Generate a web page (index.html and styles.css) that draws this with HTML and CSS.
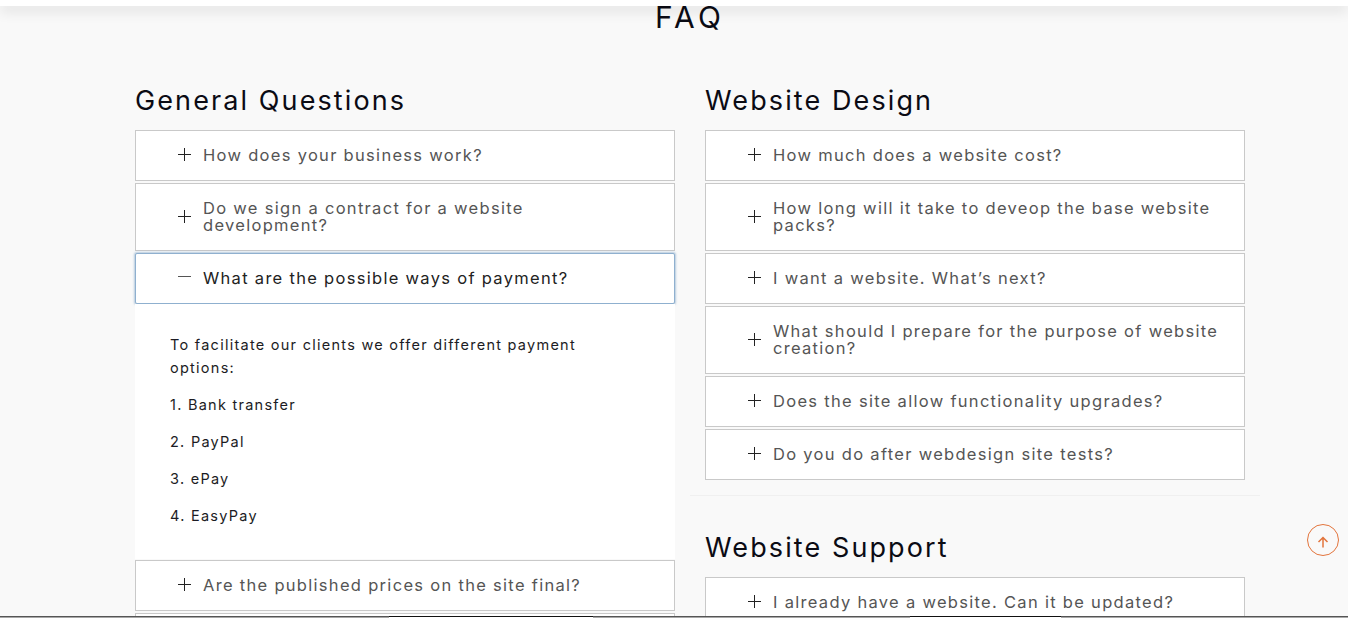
FILE: index.html
```html
<!DOCTYPE html>
<html lang="en">
<head>
    <meta charset="UTF-8">
    <meta name="viewport" content="width=device-width, initial-scale=1.0">
    <title>FAQ</title>
    <link rel="stylesheet" href="styles.css">
</head>
<body>
    <header class="top-bar"></header>

    <main class="faq">
        <h1>FAQ</h1>
        <div class="faq-columns">
            <section class="faq-col">
                <h2>General Questions</h2>
                <div class="faq-item"><span class="plus"></span><span class="q">How does your business work?</span></div>
                <div class="faq-item"><span class="plus"></span><span class="q">Do we sign a contract for a website development?</span></div>
                <div class="faq-item open"><span class="minus"></span><span class="q">What are the possible ways of payment?</span></div>
                <div class="answer">
                    <p>To facilitate our clients we offer different payment options:</p>
                    <p>1. Bank transfer</p>
                    <p>2. PayPal</p>
                    <p>3. ePay</p>
                    <p>4. EasyPay</p>
                </div>
                <div class="faq-item"><span class="plus"></span><span class="q">Are the published prices on the site final?</span></div>
                <div class="faq-item"></div>
            </section>
            <section class="faq-col">
                <h2>Website Design</h2>
                <div class="faq-item"><span class="plus"></span><span class="q">How much does a website cost?</span></div>
                <div class="faq-item"><span class="plus"></span><span class="q">How long will it take to deveop the base website packs?</span></div>
                <div class="faq-item"><span class="plus"></span><span class="q">I want a website. What’s next?</span></div>
                <div class="faq-item"><span class="plus"></span><span class="q">What should I prepare for the purpose of website creation?</span></div>
                <div class="faq-item"><span class="plus"></span><span class="q">Does the site allow functionality upgrades?</span></div>
                <div class="faq-item"><span class="plus"></span><span class="q">Do you do after webdesign site tests?</span></div>
                <hr class="divider">
                <h2>Website Support</h2>
                <div class="faq-item"><span class="plus"></span><span class="q">I already have a website. Can it be updated?</span></div>
            </section>
        </div>
    </main>

    <a class="to-top" href="#">
        <svg width="12" height="12" viewBox="0 0 12 12" fill="none" stroke="#e2743c" stroke-width="1.5">
            <path d="M6 11.500V1.500M1.500 6L6 1.500 10.500 6"/>
        </svg>
    </a>
    <div class="bottom-line">
        <span class="edge edge-left"></span>
        <span class="edge edge-right"></span>
    </div>
</body>
</html>
```

FILE: styles.css
```css
html, body {
    height: 618px;
    overflow: hidden;
}
body {
    margin: 0;
    background-color: #f9f9f9;
    font-family: "Inter", "Liberation Sans", sans-serif;
    color: #0b0b14;
}
.top-bar {
    position: fixed;
    top: 0;
    left: 0;
    right: 0;
    height: 6px;
    background: white;
    box-shadow: 0 4px 14px rgba(0,0,0,0.16);
}
.faq {
    width: 1110px;
    margin-left: 135px;
}
h1 {
    margin: 0;
    padding-top: 1px;
    height: 33px;
    line-height: 33px;
    font-size: 30px;
    font-weight: 400;
    letter-spacing: 4.2px;
    text-align: center;
}
.faq-columns {
    display: grid;
    grid-template-columns: 540px 540px;
    column-gap: 30px;
    margin-top: 49px;
}
h2 {
    margin: 0 0 12px;
    height: 35px;
    line-height: 35px;
    font-size: 27px;
    font-weight: 400;
    letter-spacing: 2.1px;
}
.faq-item {
    display: flex;
    align-items: center;
    gap: 12px;
    box-sizing: border-box;
    min-height: 51px;
    margin-bottom: 2px;
    padding: 16px 24px 16px 42px;
    background: white;
    border: 1px solid #c9c9c9;
}
.q {
    font-size: 16.5px;
    line-height: 17px;
    letter-spacing: 1.3px;
    color: #555;
}
.plus, .minus {
    position: relative;
    flex: none;
    width: 13px;
    height: 13px;
    top: -1px;
}
.plus::before, .minus::before {
    content: "";
    position: absolute;
    left: 0;
    right: 0;
    top: 6px;
    height: 1px;
    background: #222;
}
.plus::after {
    content: "";
    position: absolute;
    top: 0;
    bottom: 0;
    left: 6px;
    width: 1px;
    background: #222;
}
.minus::before {
    top: 5px;
    background: #555;
}
.open {
    border-color: #8fb0cf;
    box-shadow: 0 0 2px 1px rgba(130,165,200,0.55);
    border-radius: 2px;
    margin-bottom: 0;
}
.open .q {
    color: #222;
}
.answer {
    background: white;
    padding: 29px 45px 18px 35px;
    margin-bottom: 1px;
}
.answer p {
    margin: 0 0 14px;
    font-size: 14.5px;
    line-height: 23px;
    letter-spacing: 1.26px;
    color: #1c1c24;
}
.divider {
    margin: 15px -15px 34px;
    border: 0;
    border-top: 1px solid #f0f0f0;
}
.to-top {
    position: fixed;
    left: 1307px;
    top: 524px;
    box-sizing: border-box;
    width: 32px;
    height: 32px;
    padding-top: 3px;
    display: flex;
    align-items: center;
    justify-content: center;
    border: 1px solid #e2743c;
    border-radius: 50%;
}
.bottom-line {
    position: fixed;
    left: 0;
    right: 0;
    top: 616px;
    height: 2px;
    box-sizing: border-box;
    border-top: 1px solid #555;
    background: #a8a8a8;
}
.edge {
    position: absolute;
    top: -1px;
    height: 2px;
    box-sizing: border-box;
    border-top: 1px solid #111;
    background: white;
}
.edge-left {
    left: 389px;
    width: 204px;
}
.edge-right {
    left: 910px;
    width: 151px;
}
```
